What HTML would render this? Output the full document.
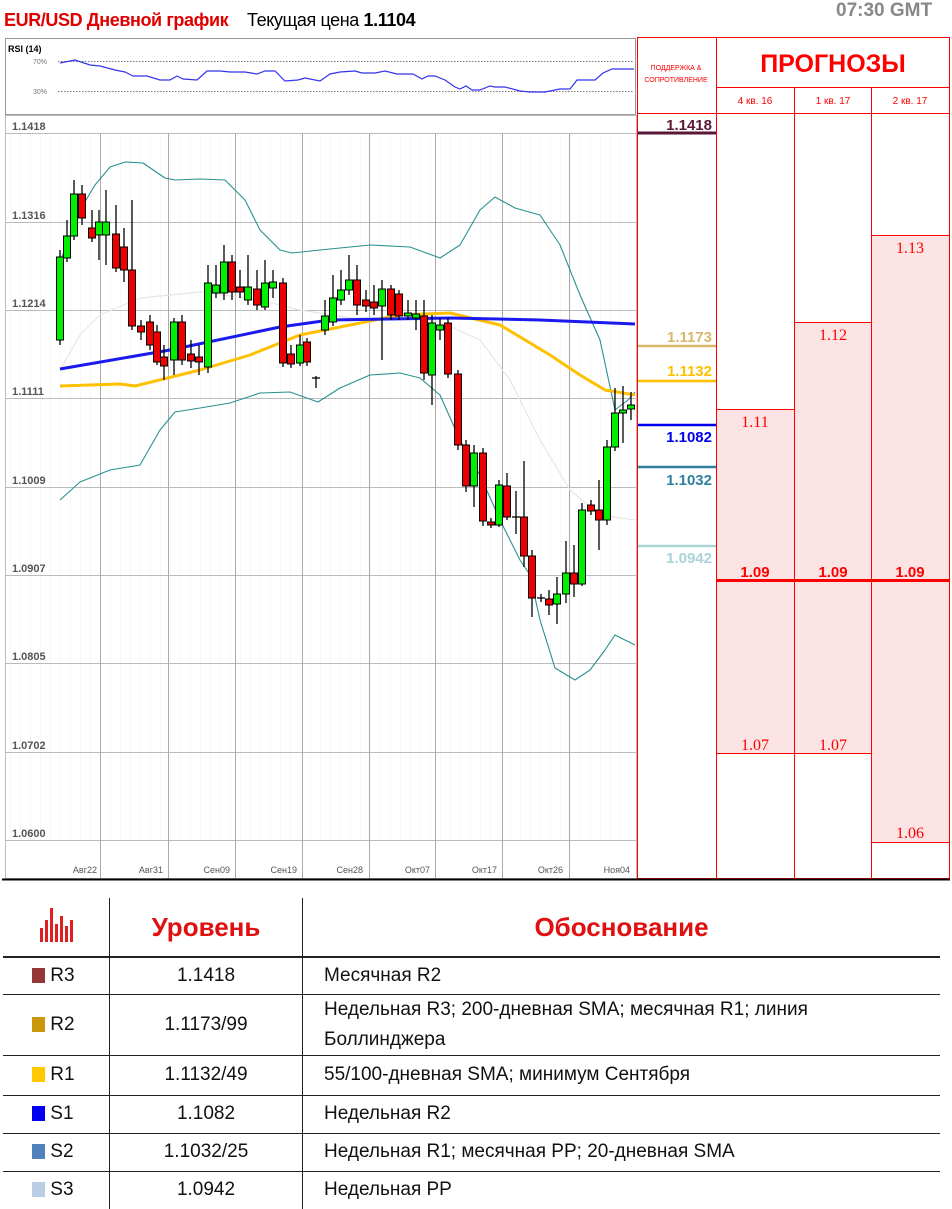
<!DOCTYPE html>
<html><head><meta charset="utf-8"><style>
body{margin:0;width:952px;height:1207px;background:#fff;font-family:"Liberation Sans",sans-serif;position:relative;overflow:hidden}
.a{position:absolute;white-space:nowrap}
table{border-collapse:collapse}
td{padding-top:0;padding-bottom:0}
</style></head><body>
<div class="a" style="left:4px;top:10px;font-size:18px;font-weight:bold;color:#e00000;letter-spacing:-0.4px">EUR/USD Дневной график</div>
<div class="a" style="left:247px;top:10px;font-size:18px;color:#000;letter-spacing:-0.4px">Текущая цена <b>1.1104</b></div>
<div class="a" style="left:836px;top:0px;font-size:19px;font-weight:bold;color:#888">07:30 GMT</div>

<svg class="a" style="left:0;top:0" width="952" height="1207" id="s">
<rect x="5.5" y="38.5" width="630" height="76" fill="#fff" stroke="#999"/>
<text x="8" y="52" font-size="9" font-family="Liberation Sans" font-weight="bold">RSI (14)</text>
<text x="33" y="64" font-size="7" fill="#777" font-family="Liberation Sans">70%</text>
<text x="33" y="94" font-size="7" fill="#777" font-family="Liberation Sans">30%</text>
<line x1="58" y1="61.5" x2="634" y2="61.5" stroke="#777" stroke-dasharray="1.5,1.5"/>
<line x1="58" y1="91.5" x2="634" y2="91.5" stroke="#777" stroke-dasharray="1.5,1.5"/>
<polyline fill="none" stroke="#3333ee" stroke-width="1.2" points="60,63 75,60 90,65 100,66 115,70 125,72 133,76 147,76 160,80 170,80 177,76 183,79 197,80 207,71 220,71 230,72 245,72 257,74 265,71 275,71 285,81 298,80 305,78 320,81 330,74 340,72 355,71 362,73 375,73 385,71 397,74 405,74 413,74 422,79 428,76 435,76 445,80 455,87 460,89 466,86 472,90 480,90 490,86 495,87 505,87 520,91 530,92 545,92 555,90 560,89 570,89 577,80 584,80 595,80 603,73 612,69 622,69 634,69"/>
<rect x="5.5" y="115.5" width="631" height="763" fill="#fff" stroke="#bbb"/>
<g id="grid" stroke="#aaa" stroke-width="1"></g>
<g id="lbl" font-family="Liberation Sans" font-size="11" fill="#555" font-weight="bold"></g>
<g id="dates" font-family="Liberation Sans" font-size="9" fill="#555" text-anchor="end"></g>
<g id="lines" fill="none"></g>
<g id="candles"></g>
<g stroke="#f00" stroke-width="1">
<rect x="637.5" y="37.5" width="312" height="841" fill="none"/>
<line x1="716.5" y1="37" x2="716.5" y2="879"/>
<line x1="716" y1="87.5" x2="950" y2="87.5"/>
<line x1="637" y1="113.5" x2="950" y2="113.5"/>
</g>
<rect x="717" y="409" width="77" height="344" fill="#fde4e4"/>
<rect x="795" y="322" width="76" height="431" fill="#fde4e4"/>
<rect x="872" y="235" width="77" height="608" fill="#fde4e4"/>
<g stroke="#f00" stroke-width="1">
<line x1="794.5" y1="87" x2="794.5" y2="879"/>
<line x1="871.5" y1="87" x2="871.5" y2="879"/>
<line x1="717" y1="409.5" x2="794" y2="409.5"/>
<line x1="795" y1="322.5" x2="871" y2="322.5"/>
<line x1="872" y1="235.5" x2="950" y2="235.5"/>
<line x1="717" y1="753.5" x2="871" y2="753.5"/>
<line x1="872" y1="842.5" x2="950" y2="842.5"/>
<line x1="717" y1="580.5" x2="950" y2="580.5" stroke-width="3"/>
</g>
<g font-family="Liberation Sans" fill="#f00" text-anchor="middle">
<text x="676" y="70" font-size="7">ПОДДЕРЖКА &amp;</text>
<text x="676" y="82" font-size="7">СОПРОТИВЛЕНИЕ</text>
<text x="833" y="72" font-size="25" font-weight="bold">ПРОГНОЗЫ</text>
<text x="755" y="104" font-size="10">4 кв. 16</text>
<text x="833" y="104" font-size="10">1 кв. 17</text>
<text x="910" y="104" font-size="10">2 кв. 17</text>
<g font-family="Liberation Serif" font-size="16">
<text x="755" y="427">1.11</text><text x="833" y="340">1.12</text><text x="910" y="253">1.13</text>
<text x="755" y="750">1.07</text><text x="833" y="750">1.07</text><text x="910" y="838">1.06</text>
</g>
<g font-size="15" font-weight="bold">
<text x="755" y="577">1.09</text><text x="833" y="577">1.09</text><text x="910" y="577">1.09</text>
</g>
</g>
<g font-family="Liberation Sans" font-size="15" font-weight="bold" text-anchor="end">
<text x="712" y="130" fill="#5a1838">1.1418</text><line x1="638" y1="133" x2="716" y2="133" stroke="#5a1838" stroke-width="3"/>
<text x="712" y="342" fill="#d8b66a">1.1173</text><line x1="638" y1="346" x2="716" y2="346" stroke="#d8b66a" stroke-width="2.5"/>
<text x="712" y="376" fill="#ffc000">1.1132</text><line x1="638" y1="381" x2="716" y2="381" stroke="#ffc000" stroke-width="2.5"/>
<text x="712" y="442" fill="#0000ee">1.1082</text><line x1="638" y1="425" x2="716" y2="425" stroke="#0000ee" stroke-width="2.5"/>
<text x="712" y="485" fill="#31809c">1.1032</text><line x1="638" y1="467" x2="716" y2="467" stroke="#31809c" stroke-width="2.5"/>
<text x="712" y="563" fill="#a8d4d8">1.0942</text><line x1="638" y1="546" x2="716" y2="546" stroke="#a8d4d8" stroke-width="2.5"/>
</g>
<line x1="2" y1="879.5" x2="950" y2="879.5" stroke="#000" stroke-width="2"/>
</svg>

<div class="a" style="left:3px;top:898px;width:937px">
<table style="width:937px;font-size:19px;color:#111">
<tr style="height:59px;border-bottom:2px solid #222">
<td style="width:104px;border-right:1px solid #222;text-align:center">
<svg width="36" height="36" viewBox="0 0 36 36"><g fill="#e02020"><rect x="2" y="22" width="3" height="14"/><rect x="7" y="14" width="3" height="22"/><rect x="12" y="2" width="3" height="34"/><rect x="17" y="18" width="3" height="18"/><rect x="22" y="10" width="3" height="26"/><rect x="27" y="20" width="3" height="16"/><rect x="32" y="14" width="3" height="22"/></g></svg></td>
<td style="width:190px;border-right:1px solid #222;text-align:center;font-size:26px;font-weight:bold;color:#e01010">Уровень</td>
<td style="text-align:center;font-size:26px;font-weight:bold;color:#e01010">Обоснование</td></tr>
<tr style="height:37px;border-bottom:1px solid #222"><td style="border-right:1px solid #222;padding-left:29px"><span style="display:inline-block;width:13px;height:15px;background:#953735;vertical-align:-2px"></span> R3</td><td style="border-right:1px solid #222;text-align:center">1.1418</td><td style="padding-left:21px">Месячная R2</td></tr>
<tr style="height:61px;border-bottom:1px solid #222"><td style="border-right:1px solid #222;padding-left:29px"><span style="display:inline-block;width:13px;height:15px;background:#c8970a;vertical-align:-2px"></span> R2</td><td style="border-right:1px solid #222;text-align:center">1.1173/99</td><td style="padding-left:21px;line-height:30px">Недельная R3; 200-дневная SMA; месячная R1; линия<br>Боллинджера</td></tr>
<tr style="height:40px;border-bottom:1px solid #222"><td style="border-right:1px solid #222;padding-left:29px"><span style="display:inline-block;width:13px;height:15px;background:#ffc800;vertical-align:-2px"></span> R1</td><td style="border-right:1px solid #222;text-align:center">1.1132/49</td><td style="padding-left:21px">55/100-дневная SMA; минимум Сентября</td></tr>
<tr style="height:38px;border-bottom:1px solid #222"><td style="border-right:1px solid #222;padding-left:29px"><span style="display:inline-block;width:13px;height:15px;background:#0000ee;vertical-align:-2px"></span> S1</td><td style="border-right:1px solid #222;text-align:center">1.1082</td><td style="padding-left:21px">Недельная R2</td></tr>
<tr style="height:38px;border-bottom:1px solid #222"><td style="border-right:1px solid #222;padding-left:29px"><span style="display:inline-block;width:13px;height:15px;background:#4f81bd;vertical-align:-2px"></span> S2</td><td style="border-right:1px solid #222;text-align:center">1.1032/25</td><td style="padding-left:21px">Недельная R1; месячная PP; 20-дневная SMA</td></tr>
<tr style="height:38px"><td style="border-right:1px solid #222;padding-left:29px"><span style="display:inline-block;width:13px;height:15px;background:#b9cde5;vertical-align:-2px"></span> S3</td><td style="border-right:1px solid #222;text-align:center">1.0942</td><td style="padding-left:21px">Недельная PP</td></tr>
</table></div>

<script>
var NS="http://www.w3.org/2000/svg";
function el(p,t,a){var e=document.createElementNS(NS,t);for(var k in a)e.setAttribute(k,a[k]);document.getElementById(p).appendChild(e);return e;}
for(var x=10;x<636;x+=10)el("grid","line",{x1:x+.5,x2:x+.5,y1:133,y2:840,stroke:"#f7f7f7"});
var hy=[133,222,310,398,487,575,663,752,840],hl=["1.1418","1.1316","1.1214","1.1111","1.1009","1.0907","1.0805","1.0702","1.0600"];
hy.forEach(function(y,i){el("grid","line",{x1:6,x2:636,y1:y+.5,y2:y+.5,stroke:"#bbb"});var t=el("lbl","text",{x:12,y:y-3});t.textContent=hl[i];});
var vx=[100,168,235,302,369,435,502,569];
vx.forEach(function(x){el("grid","line",{x1:x+.5,x2:x+.5,y1:133,y2:879,stroke:"#aaa"});});
var dl=["Авг22","Авг31","Сен09","Сен19","Сен28","Окт07","Окт17","Окт26","Ноя04"],dx=[97,163,230,297,363,430,497,563,630];
dl.forEach(function(d,i){var t=el("dates","text",{x:dx[i],y:873});t.textContent=d;});
function pl(c,w,pts){el("lines","polyline",{points:pts,stroke:c,"stroke-width":w,fill:"none","stroke-linejoin":"round"});}
pl("#e6e6e6",1.2,"60,370 80,335 100,315 140,298 200,292 260,300 300,310 350,318 400,318 440,322 480,340 510,380 540,440 570,490 600,515 635,520");
pl("#2a9090",1.1,"60,262 80,210 95,185 110,167 125,162 143,163 165,178 175,180 200,179 225,180 245,200 260,230 280,250 292,253 320,250 340,248 370,245 410,247 440,258 460,245 480,210 495,197 515,208 540,215 560,245 580,295 600,340 615,410 628,400 635,392");
pl("#2a9090",1.1,"60,500 80,482 110,470 140,465 160,430 175,412 200,408 230,403 260,393 290,392 318,402 340,388 370,375 400,373 420,378 440,395 460,440 480,475 500,520 520,560 530,575 540,620 555,668 575,680 590,670 605,650 615,635 635,645");
pl("#ffc000",3,"60,386 120,384 135,386 200,370 250,355 300,335 350,325 400,315 450,313 500,325 550,355 580,375 605,390 635,395");
pl("#1a1aee",3,"60,369 170,350 280,327 330,320 450,318 540,320 635,324");
var C=[[60,'g',257,340,250,345],[67,'g',236,258,220,262],[74,'g',194,236,180,240],[82,'r',194,218,185,225],[92,'r',228,238,210,242],[99,'g',222,235,210,260],[106,'g',222,235,190,265],[116,'r',234,268,205,272],[124,'r',247,270,228,282],[132,'r',270,326,200,330],[141,'r',326,332,320,340],[150,'r',322,345,315,350],[157,'r',332,362,325,365],[164,'r',357,366,345,380],[174,'g',322,360,318,375],[182,'r',322,360,315,365],[191,'r',354,361,340,368],[199,'r',357,362,345,375],[208,'g',283,367,265,373],[216,'g',285,293,265,298],[224,'g',262,293,245,300],[232,'r',262,292,255,300],[240,'r',287,292,270,298],[248,'g',287,300,255,305],[257,'r',289,305,270,310],[265,'g',283,307,260,310],[273,'g',282,288,270,298],[283,'r',283,363,278,367],[291,'r',354,364,345,368],[300,'g',345,363,335,366],[307,'r',342,362,338,366],[316,'k',378,379,376,388],[325,'g',316,330,300,335],[333,'g',298,322,275,326],[341,'g',290,300,270,305],[349,'g',280,290,255,295],[357,'r',280,305,265,315],[366,'r',300,306,290,312],[374,'r',302,308,285,315],[382,'g',289,306,280,360],[391,'r',289,315,285,320],[399,'r',294,316,290,320],[408,'g',313,316,300,320],[416,'g',314,318,300,330],[424,'r',316,373,300,380],[432,'g',323,375,315,405],[440,'g',325,330,318,340],[448,'r',323,374,318,378],[458,'r',374,445,370,450],[466,'r',445,486,440,492],[474,'g',453,486,445,507],[483,'r',453,521,448,526],[491,'r',522,525,518,528],[499,'g',485,525,480,527],[507,'r',486,517,473,520],[516,'k',517,518,491,534],[524,'r',517,556,461,567],[532,'r',556,598,550,617],[541,'k',598,599,594,602],[549,'r',599,605,590,615],[557,'g',594,604,577,624],[566,'g',573,594,541,603],[574,'r',573,584,545,597],[582,'g',510,584,503,586],[591,'r',505,511,500,515],[599,'r',510,520,480,550],[607,'g',447,520,440,525],[615,'g',413,447,388,451],[623,'g',410,413,386,443],[631,'g',405,409,392,420]];
C.forEach(function(c){var x=c[0];el("candles","line",{x1:x,x2:x,y1:c[4],y2:c[5],stroke:"#000","stroke-width":1.3});
if(c[1]=='k'){el("candles","line",{x1:x-4,x2:x+4,y1:c[2],y2:c[2],stroke:"#000","stroke-width":1.3});return;}
el("candles","rect",{x:x-3.5,y:c[2],width:7,height:Math.max(2,c[3]-c[2]),fill:c[1]=='g'?"#00ee00":"#ee0000",stroke:"#000","stroke-width":1});});
</script>
</body></html>
